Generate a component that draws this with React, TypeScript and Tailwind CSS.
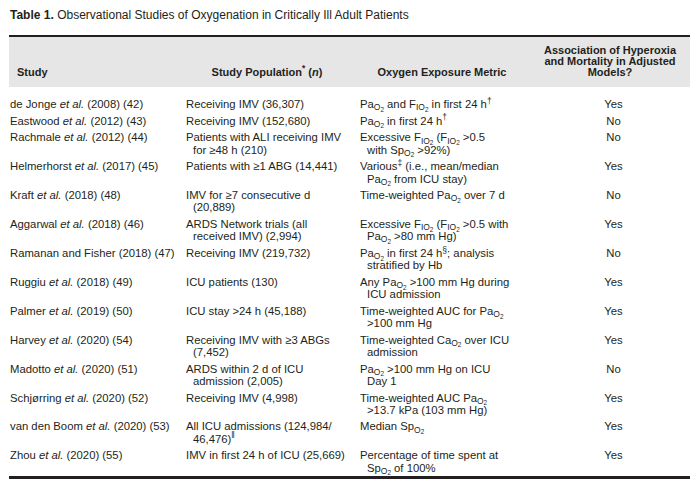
import React from 'react';

type Row = {
  study: React.ReactNode;
  population: React.ReactNode[];
  metric: React.ReactNode[];
  assoc: 'Yes' | 'No';
};

// subscript helpers for the blood gas notation
const O2 = () => (
  <sub>
    O<sub>2</sub>
  </sub>
);
const Pa = () => (
  <>
    Pa<O2 />
  </>
);
const Fi = () => (
  <>
    F<sub>I</sub>
    <sub>
      O<sub>2</sub>
    </sub>
  </>
);
const Sp = () => (
  <>
    Sp<O2 />
  </>
);
const Ca = () => (
  <>
    Ca<O2 />
  </>
);

const etal = (name: string, rest: string) => (
  <>
    {name} <i>et al.</i> {rest}
  </>
);

const rows: Row[] = [
  {
    study: etal('de Jonge', '(2008) (42)'),
    population: ['Receiving IMV (36,307)'],
    metric: [
      <>
        <Pa /> and <Fi /> in first 24 h<sup>†</sup>
      </>,
    ],
    assoc: 'Yes',
  },
  {
    study: etal('Eastwood', '(2012) (43)'),
    population: ['Receiving IMV (152,680)'],
    metric: [
      <>
        <Pa /> in first 24 h<sup>†</sup>
      </>,
    ],
    assoc: 'No',
  },
  {
    study: etal('Rachmale', '(2012) (44)'),
    population: ['Patients with ALI receiving IMV', 'for ≥48 h (210)'],
    metric: [
      <>
        Excessive <Fi /> (<Fi /> &gt;0.5
      </>,
      <>
        with <Sp /> &gt;92%)
      </>,
    ],
    assoc: 'No',
  },
  {
    study: etal('Helmerhorst', '(2017) (45)'),
    population: ['Patients with ≥1 ABG (14,441)'],
    metric: [
      <>
        Various<sup>‡</sup> (i.e., mean/median
      </>,
      <>
        <Pa /> from ICU stay)
      </>,
    ],
    assoc: 'Yes',
  },
  {
    study: etal('Kraft', '(2018) (48)'),
    population: ['IMV for ≥7 consecutive d', '(20,889)'],
    metric: [
      <>
        Time-weighted <Pa /> over 7 d
      </>,
    ],
    assoc: 'No',
  },
  {
    study: etal('Aggarwal', '(2018) (46)'),
    population: ['ARDS Network trials (all', 'received IMV) (2,994)'],
    metric: [
      <>
        Excessive <Fi /> (<Fi /> &gt;0.5 with
      </>,
      <>
        <Pa /> &gt;80 mm Hg)
      </>,
    ],
    assoc: 'Yes',
  },
  {
    study: 'Ramanan and Fisher (2018) (47)',
    population: ['Receiving IMV (219,732)'],
    metric: [
      <>
        <Pa /> in first 24 h<sup>§</sup>; analysis
      </>,
      'stratified by Hb',
    ],
    assoc: 'No',
  },
  {
    study: etal('Ruggiu', '(2018) (49)'),
    population: ['ICU patients (130)'],
    metric: [
      <>
        Any <Pa /> &gt;100 mm Hg during
      </>,
      'ICU admission',
    ],
    assoc: 'Yes',
  },
  {
    study: etal('Palmer', '(2019) (50)'),
    population: ['ICU stay >24 h (45,188)'],
    metric: [
      <>
        Time-weighted AUC for <Pa />
      </>,
      '>100 mm Hg',
    ],
    assoc: 'Yes',
  },
  {
    study: etal('Harvey', '(2020) (54)'),
    population: ['Receiving IMV with ≥3 ABGs', '(7,452)'],
    metric: [
      <>
        Time-weighted <Ca /> over ICU
      </>,
      'admission',
    ],
    assoc: 'Yes',
  },
  {
    study: etal('Madotto', '(2020) (51)'),
    population: ['ARDS within 2 d of ICU', 'admission (2,005)'],
    metric: [
      <>
        <Pa /> &gt;100 mm Hg on ICU
      </>,
      'Day 1',
    ],
    assoc: 'No',
  },
  {
    study: etal('Schjørring', '(2020) (52)'),
    population: ['Receiving IMV (4,998)'],
    metric: [
      <>
        Time-weighted AUC <Pa />
      </>,
      '>13.7 kPa (103 mm Hg)',
    ],
    assoc: 'Yes',
  },
  {
    study: etal('van den Boom', '(2020) (53)'),
    population: [
      'All ICU admissions (124,984/',
      <>
        46,476)<sup>‖</sup>
      </>,
    ],
    metric: [
      <>
        Median <Sp />
      </>,
    ],
    assoc: 'Yes',
  },
  {
    study: etal('Zhou', '(2020) (55)'),
    population: ['IMV in first 24 h of ICU (25,669)'],
    metric: [
      'Percentage of time spent at',
      <>
        <Sp /> of 100%
      </>,
    ],
    assoc: 'Yes',
  },
];

function Lines({ lines }: { lines: React.ReactNode[] }) {
  return (
    <div>
      {lines.map((l, i) => (
        <div key={i} className={i > 0 ? 'pl-[7px]' : ''}>
          {l}
        </div>
      ))}
    </div>
  );
}

const cols = 'grid grid-cols-[177px_174px_177px_1fr]';

export default function App() {
  return (
    <div
      className="w-[698px] h-[482px] bg-white text-[#231f20] overflow-hidden"
      style={{ fontFamily: '"Liberation Sans", Arial, sans-serif' }}
    >
      {/* titel */}
      <div className="pt-[8px] pl-[10px] text-[12px] leading-[14px]">
        <span className="font-bold">Table 1.</span> Observational Studies of Oxygenation in Critically Ill Adult
        Patients
      </div>

      <div className="mt-[13px] ml-[9px] w-[681px]">
        {/* kop */}
        <div className={`${cols} items-end border-t-2 border-[#231f20] bg-[#e6e6e6] pt-[7.5px] pb-[9.5px] text-[11px] leading-[11px] font-bold`}>
          <div className="pl-[8px]">Study</div>
          <div className="text-center pr-[12px]">
            Study Population<sup>*</sup> (<i>n</i>)
          </div>
          <div className="text-center pr-[13px]">Oxygen Exposure Metric</div>
          <div className="text-center pr-[7px]">
            Association of Hyperoxia
            <br />
            and Mortality in Adjusted
            <br />
            Models?
          </div>
        </div>

        {/* rijen */}
        <div className="pt-[8.75px] text-[11.3px] leading-[12.2px] whitespace-nowrap">
          {rows.map((r, i) => (
            <div key={i} className={`${cols} py-[2.25px]`}>
              <div className="pl-[1px]">{r.study}</div>
              <Lines lines={r.population} />
              <Lines lines={r.metric} />
              <div className="text-center">{r.assoc}</div>
            </div>
          ))}
        </div>

        <div className="h-[3px] bg-[#231f20]" />
      </div>
    </div>
  );
}
